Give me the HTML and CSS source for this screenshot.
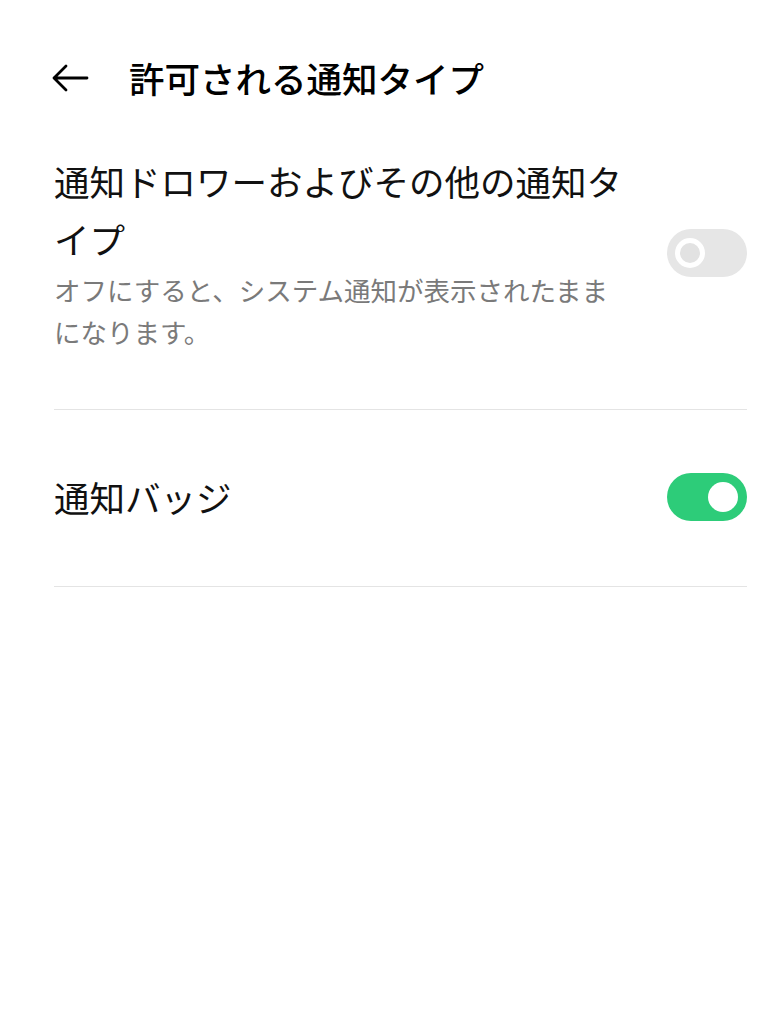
FILE: index.html
```html
<!DOCTYPE html>
<html lang="ja">
<head>
<meta charset="utf-8">
<link rel="stylesheet" href="styles.css">
</head>
<body>
<div class="page">
  <header class="header">
    <svg class="back" width="38" height="30" viewBox="0 0 38 30">
      <path d="M36 15 H3 M15 3 L3 15 L15 27" fill="none" stroke="#000" stroke-width="2.8" stroke-linecap="round" stroke-linejoin="round"/>
    </svg>
    <h1 class="title">許可される通知タイプ</h1>
  </header>
  <div class="list">
    <div class="item item-first">
      <div class="text">
        <div class="item-title">通知ドロワーおよびその他の通知タイプ</div>
        <div class="item-sub">オフにすると、システム通知が表示されたままになります。</div>
      </div>
      <div class="toggle off"><span class="knob"></span></div>
    </div>
    <div class="item item-second">
      <div class="text">
        <div class="item-title">通知バッジ</div>
      </div>
      <div class="toggle on"><span class="knob"></span></div>
    </div>
  </div>
</div>
</body>
</html>
```

FILE: styles.css
```css
* { box-sizing: border-box; }
html, body { margin: 0; padding: 0; background: #fff; }
body {
  font-family: "Noto Sans CJK JP", "Noto Sans", sans-serif;
  color: #000;
  width: 775px;
  height: 1024px;
  overflow: hidden;
}
.page { padding: 0 28px 0 54px; }
.header {
  display: flex;
  align-items: center;
  padding-top: 56px;
  padding-bottom: 52px;
}
.back { margin-left: -3px; flex: none; }
.title {
  margin: 0 0 0 40px;
  font-size: 35.5px;
  font-weight: 500;
  line-height: 44px;
  letter-spacing: 0;
}
.item {
  display: flex;
  align-items: center;
  justify-content: space-between;
  border-bottom: 1px solid #e4e4e4;
}
.item-first { padding: 0 0 56px 0; }
.item-second { padding: 58px 0 60px 0; }
.text { width: 575px; }
.item-title {
  font-size: 35.5px;
  line-height: 58px;
  color: #111;
}
.item-sub {
  font-size: 26.5px;
  line-height: 42px;
  color: #7a7a7a;
  margin-top: 1px;
}
.toggle {
  position: relative;
  width: 80px;
  height: 48px;
  border-radius: 24px;
  flex: none;
}
.toggle.off { background: #e6e6e6; }
.toggle.on { background: #2dcc79; }
.knob {
  position: absolute;
  top: 9px;
  width: 30px;
  height: 30px;
  border-radius: 50%;
}
.off .knob { left: 8px; background: #e2e2e2; border: 5px solid #fff; }
.on .knob { right: 9px; background: #fff; }
```
